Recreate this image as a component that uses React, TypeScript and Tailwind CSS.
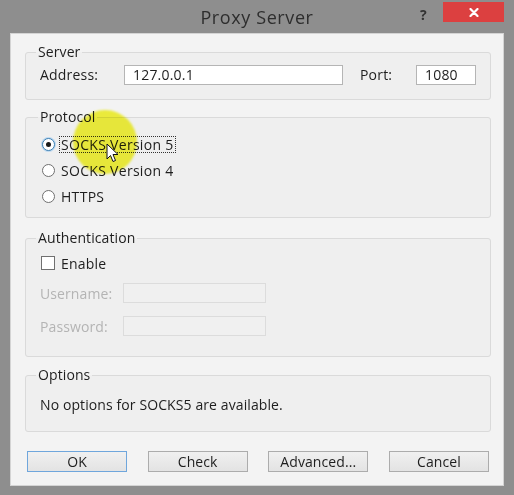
import type { ReactNode } from 'react'

const font = { fontFamily: '"Open Sans", "Noto Sans", sans-serif' }

function Group(props: { label: string; className: string; children: ReactNode }) {
  return (
    <fieldset className={`border border-[#dadada] rounded-[3px] bg-[#efefef] px-[14px] ${props.className}`}>
      <legend className="ml-[-4px] px-[2px] text-[14px] leading-[16px] tracking-[0.1px] text-[#1e1e1e]">{props.label}</legend>
      {props.children}
    </fieldset>
  )
}

function Radio(props: { label: string; checked?: boolean; focused?: boolean }) {
  return (
    <div className="flex h-[26px] items-center">
      <span
        className={`flex h-[13px] w-[13px] items-center justify-center rounded-full border bg-white ${
          props.checked ? 'border-[#3c7fb1] shadow-[0_0_0_1px_#bcd8f0]' : 'border-[#707070]'
        }`}
      >
        {props.checked && <span className="h-[5px] w-[5px] rounded-full bg-[#1a1a1a]" />}
      </span>
      <span
        className={`ml-[5px] px-[1px] text-[14px] leading-[15px] tracking-[0.3px] text-[#1e1e1e] ${
          props.focused ? 'outline outline-1 outline-dotted outline-[#333]' : ''
        }`}
      >
        {props.label}
      </span>
    </div>
  )
}

function Button(props: { label: string; primary?: boolean }) {
  return (
    <button
      type="button"
      className={`h-[21px] w-[100px] border bg-[linear-gradient(#f0f0f0,#e3e3e3)] text-[14px] leading-[19px] tracking-[0.1px] text-[#1e1e1e] ${
        props.primary ? 'border-[#6fa6dc]' : 'border-[#acacac]'
      }`}
    >
      {props.label}
    </button>
  )
}

export default function App() {
  return (
    <div className="relative flex h-[495px] w-[514px] flex-col overflow-hidden bg-[#8e8e8e]" style={font}>
      {/* title bar */}
      <div className="relative flex h-[33px] shrink-0 items-center justify-center">
        <span className="text-[18px] leading-[20px] tracking-[0.6px] text-[#2e2e2e]">Proxy Server</span>
        <span className="absolute left-[420px] top-[4px] text-[14px] font-bold text-[#333]">?</span>
        <div className="absolute left-[443px] top-[2px] flex h-[20px] w-[61px] items-center justify-center bg-[#dc4040]">
          <svg width="10" height="9" viewBox="0 0 10 9">
            <path d="M1.5 1 L8.5 8 M8.5 1 L1.5 8" stroke="#fff" strokeWidth="2.2" strokeLinecap="round" />
          </svg>
        </div>
      </div>

      {/* client area */}
      <div className="mx-[10px] flex h-[453px] flex-col border border-[#d4d4d4] bg-[#f3f3f3] pl-[14px] pr-[12px]">
        <Group label="Server" className="mt-[10px] h-[56px]">
          <div className="mt-[4px] flex items-center text-[14px] tracking-[0.2px] text-[#1e1e1e]">
            <span className="w-[84px]">Address:</span>
            <div className="flex h-[20px] w-[219px] items-center border border-[#b5b5b5] bg-white px-[8px]">127.0.0.1</div>
            <span className="ml-[17px] w-[56px]">Port:</span>
            <div className="flex h-[20px] w-[60px] items-center border border-[#b5b5b5] bg-white px-[8px]">1080</div>
          </div>
        </Group>

        <Group label="Protocol" className="mt-[9px] h-[109px] !px-[16px]">
          <div className="mt-[6px] flex flex-col">
            <Radio label="SOCKS Version 5" checked focused />
            <Radio label="SOCKS Version 4" />
            <Radio label="HTTPS" />
          </div>
        </Group>

        <Group label="Authentication" className="mt-[12px] h-[127px]">
          <div className="mt-[4px] flex h-[26px] items-center pl-[1px]">
            <span className="h-[14px] w-[14px] border border-[#707070] bg-white" />
            <span className="ml-[6px] text-[14px] tracking-[0.2px] text-[#1e1e1e]">Enable</span>
          </div>
          <div className="mt-[7px] flex h-[20px] items-center text-[14px] tracking-[0.1px] text-[#b4b4b4]">
            <span className="w-[83px]">Username:</span>
            <div className="h-[20px] w-[143px] border border-[#dcdcdc] bg-[#f0f0f0]" />
          </div>
          <div className="mt-[13px] flex h-[20px] items-center text-[14px] tracking-[0.1px] text-[#b4b4b4]">
            <span className="w-[83px]">Password:</span>
            <div className="h-[20px] w-[143px] border border-[#dcdcdc] bg-[#f0f0f0]" />
          </div>
        </Group>

        <Group label="Options" className="mt-[10px] h-[65px]">
          <div className="mt-[13px] text-[14px] leading-[18px] tracking-[0.1px] text-[#1e1e1e]">No options for SOCKS5 are available.</div>
        </Group>

        <div className="mt-[19px] flex justify-between pl-[2px] pr-[2px]">
          <Button label="OK" primary />
          <Button label="Check" />
          <Button label="Advanced..." />
          <Button label="Cancel" />
        </div>
      </div>

      {/* cursor highlight */}
      <div className="pointer-events-none absolute left-[73px] top-[110px] h-[64px] w-[64px] rounded-full bg-[#f4f41c]/85 blur-[1px] mix-blend-multiply" />
      <svg className="pointer-events-none absolute left-[106px] top-[143px]" width="13" height="21" viewBox="0 0 13 21">
        <path d="M1 1 L1 16 L4.5 12.5 L7 18.5 L9.5 17.5 L7 11.5 L12 11.5 Z" fill="#fff" stroke="#111" strokeWidth="1" strokeLinejoin="round" />
      </svg>
    </div>
  )
}
